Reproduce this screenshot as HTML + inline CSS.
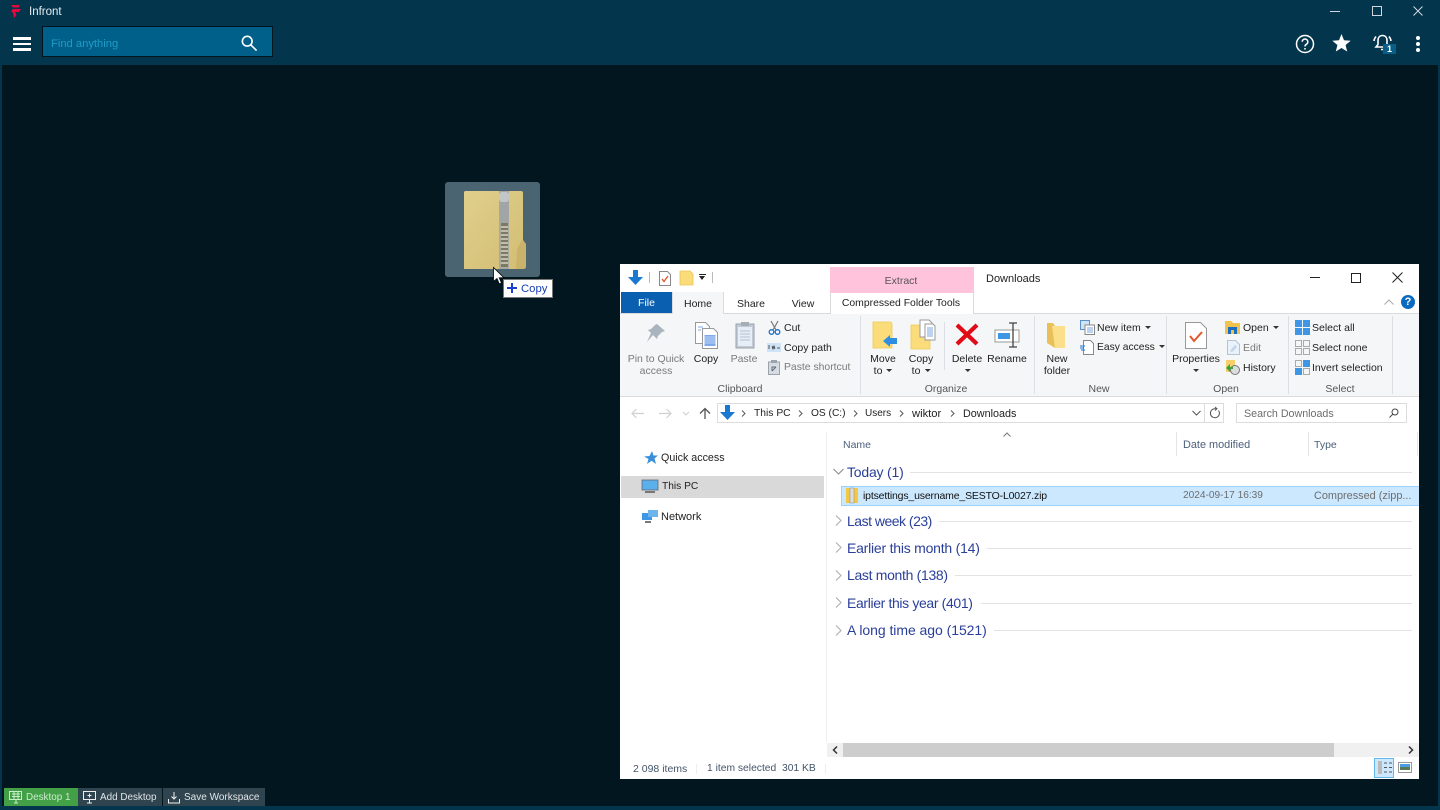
<!DOCTYPE html>
<html><head><meta charset="utf-8"><style>
html,body{margin:0;padding:0;width:1440px;height:810px;overflow:hidden;background:#01161f;font-family:"Liberation Sans",sans-serif}
#r{position:relative;width:1440px;height:810px;overflow:hidden}
.a{position:absolute}
.t{position:absolute;white-space:nowrap;font-size:11px;line-height:14px;color:#222}
.g{color:#7a7a7a}
.c{transform:translateX(-50%);text-align:center}
.h{position:absolute;white-space:nowrap;font-size:14px;line-height:18px;color:#2a3f9a}
.l{position:absolute;height:1px;background:#e3e3e3}
.v{position:absolute;width:1px;background:#dcdfe3}
.d{display:inline-block;width:0;height:0;border:3px solid transparent;border-top:3px solid #333;border-bottom:0;vertical-align:2px;margin-left:1px}
svg{position:absolute;overflow:visible}
</style></head><body><div id="r">
<!-- app chrome -->
<div class="a" style="left:0;top:0;width:1440px;height:65px;background:#03354d"></div>
<div class="a" style="left:0;top:65px;width:2px;height:745px;background:#03354d"></div>
<div class="a" style="right:0;top:65px;width:2px;height:745px;background:#03354d"></div>
<div class="a" style="left:0;top:806px;width:1440px;height:4px;background:#03354d"></div>
<svg style="left:10px;top:4px" width="12" height="15" viewBox="0 0 12 15"><path d="M1 1h9l-1.500 2.500H3zM3 5h8L9 8H5L6.500 11 4 14 3 9 1 7z" fill="#e4083f"/></svg>
<div class="t" style="left:29px;top:5px;font-size:11.500px;color:#e6edf0">Infront</div>
<div class="a" style="left:13px;top:37px;width:18px;height:2.500px;background:#fff"></div>
<div class="a" style="left:13px;top:42.500px;width:18px;height:2.500px;background:#fff"></div>
<div class="a" style="left:13px;top:48px;width:18px;height:2.500px;background:#fff"></div>
<div class="a" style="left:42px;top:26px;width:229px;height:29px;background:#00608a;border:1px solid #01141d"></div>
<div class="t" style="left:51px;top:37px;color:#1f9cc8;font-size:11.200px">Find anything</div>
<svg style="left:241px;top:35px" width="16" height="16" viewBox="0 0 18 18" fill="none" stroke="#fff" stroke-width="1.800"><circle cx="7" cy="7" r="5.500"/><path d="M11 11L17.500 17.500"/></svg>
<!-- window controls -->
<div class="a" style="left:1330px;top:11px;width:10px;height:1px;background:#cfd8dc"></div>
<div class="a" style="left:1372px;top:6px;width:8px;height:8px;border:1px solid #cfd8dc"></div>
<svg style="left:1413px;top:6px" width="10" height="10" fill="none" stroke="#cfd8dc"><path d="M.5.500l9 9M9.500.500l-9 9"/></svg>
<!-- right icons -->
<svg style="left:1295px;top:34px" width="20" height="20" viewBox="0 0 20 20" fill="none" stroke="#fff" stroke-width="1.500"><circle cx="10" cy="10" r="8.500"/><path d="M7.200 7.800a2.800 2.800 0 1 1 4.300 2.400c-1 .6-1.500 1.100-1.500 2.300"/><path d="M10 14v1.600"/></svg>
<svg style="left:1332px;top:34px" width="19" height="18" viewBox="0 0 19 18"><path d="M9.500 0l2.500 6.200 6.700.5-5.100 4.300 1.600 6.500-5.700-3.500-5.700 3.500 1.600-6.500L.300 6.700 7 6.200z" fill="#fff"/></svg>
<svg style="left:1373px;top:34px" width="20" height="18" viewBox="0 0 20 18" fill="none" stroke="#fff" stroke-width="1.600"><path d="M9.500 1.500c-3 0-4.500 2.300-4.500 5v4L3 13h13l-2-2.500v-4c0-2.700-1.500-5-4.500-5zM8 15.500h3"/><path d="M3 2.500A8 8 0 0 0 1 7M16 2.500a8 8 0 0 1 2 4.500"/></svg>
<div class="a" style="left:1383px;top:44px;width:13px;height:10px;background:#0a5d86;color:#fff;font:bold 9px/10px 'Liberation Sans';text-align:center">1</div>
<div class="a" style="left:1416px;top:36px;width:4px;height:4px;border-radius:2px;background:#fff"></div>
<div class="a" style="left:1416px;top:42px;width:4px;height:4px;border-radius:2px;background:#fff"></div>
<div class="a" style="left:1416px;top:48px;width:4px;height:4px;border-radius:2px;background:#fff"></div>
<!-- taskbar -->
<div class="a" style="left:4px;top:788px;width:74px;height:18px;background:#43a047"></div>
<div class="a" style="left:78px;top:788px;width:84px;height:18px;background:#30444f"></div>
<div class="a" style="left:163px;top:788px;width:102px;height:18px;background:#30444f"></div>
<svg style="left:9px;top:791px" width="14" height="13" fill="none" stroke="#c9eccb"><path d="M.5.500h12v8H.500zM5 12h4M7 9v3M3 3h8M3 5.500h8M5 1v7M9 1v7"/></svg>
<div class="t" style="left:26px;top:791px;font-size:9.900px;color:#c9eccb">Desktop 1</div>
<svg style="left:83px;top:791px" width="14" height="13" fill="none" stroke="#eee"><path d="M.5.500h12v8H.500zM4 12h5M6.500 9v3M6.500 2.500v4M4.500 4.500h4"/></svg>
<div class="t" style="left:100px;top:791px;font-size:9.900px;color:#dfe4e6">Add Desktop</div>
<svg style="left:168px;top:791px" width="12" height="13" fill="none" stroke="#eee"><path d="M.5 8v4h11V8M6 1v7M3.500 5.500L6 8l2.500-2.500"/></svg>
<div class="t" style="left:184px;top:791px;font-size:10px;color:#dfe4e6">Save Workspace</div>
<!-- drag ghost -->
<div class="a" style="left:445px;top:182px;width:95px;height:95px;border-radius:3px;background:#4a6472"></div>
<svg style="left:464px;top:191px" width="62" height="78" viewBox="0 0 62 78"><defs><linearGradient id="fg" x1="0" y1="0" x2="1" y2="1"><stop offset="0" stop-color="#e0cf8c"/><stop offset="1" stop-color="#d2bd72"/></linearGradient></defs><path d="M1 0h56q2 0 2 2v47l3 4v22q0 3-3 3H0V1z" fill="url(#fg)"/><path d="M53 58l-1 20h7q3 0 3-3V53l-4-4z" fill="#c9b36a"/><rect x="35" y="0" width="10" height="78" fill="#a8a9a2"/><rect x="35" y="1" width="10" height="10" rx="3" fill="#c2c6c6"/><rect x="36" y="11" width="9" height="21" fill="#a2a5a5"/><rect x="37" y="32" width="7" height="44" fill="#7d7a62"/><path d="M37 36h7M37 40h7M37 44h7M37 48h7M37 52h7M37 56h7M37 60h7M37 64h7M37 68h7M37 72h7" stroke="#d5d5c8" stroke-width="1.500"/></svg>
<svg style="left:493px;top:267px" width="12" height="18" viewBox="0 0 12 18"><path d="M.5.500v14l3.500-3 2.300 5.500 2.200-1-2.300-5.200H11z" fill="#fff" stroke="#000" stroke-width=".8"/></svg>
<div class="a" style="left:503px;top:279px;width:48px;height:17px;background:#fff;border:1px solid #777"></div>
<svg style="left:507px;top:283px" width="10" height="10"><path d="M5 0v10M0 5h10" stroke="#1a3fd0" stroke-width="2"/></svg>
<div class="t" style="left:521px;top:282px;color:#1a3fb0;font-size:11.300px">Copy</div>
<!-- explorer window -->
<div class="a" style="left:620px;top:264px;width:799px;height:515px;background:#fff"></div>
<svg style="left:628px;top:270px" width="15" height="15" viewBox="0 0 15 15"><path d="M5 0h5v7h5l-7.500 8L0 7h5z" fill="#1a78d0"/></svg>
<div class="a" style="left:649px;top:272px;width:1px;height:11px;background:#bbb"></div>
<svg style="left:659px;top:271px" width="12" height="15" fill="none"><path d="M.5.500h8l3 3v11H.500z" fill="#fff" stroke="#888"/><path d="M3 8l2 2.500L9 5" stroke="#e2562a" stroke-width="1.300"/></svg>
<svg style="left:680px;top:271px" width="13" height="15"><path d="M0 0h10l3 3v11H0z" fill="#fbdc7a" stroke="#e8c553" stroke-width=".8"/></svg>
<div class="a" style="left:699px;top:274px;width:7px;height:1px;background:#222"></div>
<div class="a" style="left:699px;top:276px;border:3.500px solid transparent;border-top:4px solid #222;border-bottom:0"></div>
<div class="a" style="left:712px;top:272px;width:1px;height:11px;background:#bbb"></div>
<div class="a" style="left:830px;top:267px;width:144px;height:26px;background:#ffc4dc"></div>
<div class="t c" style="left:901px;top:274px;color:#555;font-size:10.500px">Extract</div>
<div class="t" style="left:986px;top:272px;font-size:11px">Downloads</div>
<div class="a" style="left:1310px;top:277px;width:10px;height:1px;background:#222"></div>
<div class="a" style="left:1351px;top:273px;width:8px;height:8px;border:1px solid #222"></div>
<svg style="left:1392px;top:272px" width="11" height="11" fill="none" stroke="#222"><path d="M.5.500l10 10M10.500.500l-10 10"/></svg>
<!-- tabs -->
<div class="a" style="left:621px;top:292px;width:51px;height:21px;background:#0a5fb0;color:#fff;font-size:10.500px;line-height:23px;text-align:center">File</div>
<div class="a" style="left:620px;top:313px;width:799px;height:1px;background:#dadbdc"></div>
<div class="a" style="left:672px;top:292px;width:52px;height:22px;background:#f5f6f7;border:1px solid #dadbdc;border-bottom:0;border-top:0;box-sizing:border-box"></div>
<div class="t c" style="left:698px;top:297px;font-size:10.500px">Home</div>
<div class="t c" style="left:751px;top:297px;font-size:10.500px">Share</div>
<div class="t c" style="left:803px;top:297px;font-size:10.500px">View</div>
<div class="a" style="left:830px;top:293px;width:144px;height:21px;border:1px solid #dadbdc;border-top:0;border-bottom:0;box-sizing:border-box;background:#fff"></div>
<div class="t c" style="left:901px;top:297px;font-size:10.400px">Compressed Folder Tools</div>
<svg style="left:1384px;top:299px" width="10" height="6" fill="none" stroke="#aaa"><path d="M.5 5.500L5 1l4.500 4.500"/></svg>
<div class="a" style="left:1401px;top:295px;width:14px;height:14px;border-radius:7px;background:#0a6ac0;color:#fff;font:bold 11px/14px 'Liberation Sans';text-align:center">?</div>
<!-- ribbon -->
<div class="a" style="left:620px;top:314px;width:773px;height:82px;background:#f5f6f7"></div>
<div class="a" style="left:1393px;top:314px;width:26px;height:82px;background:#f5f6f7"></div>
<div class="a" style="left:620px;top:396px;width:799px;height:1px;background:#dadbdc"></div>
<div class="v" style="left:860px;top:316px;height:78px"></div>
<div class="v" style="left:1034px;top:316px;height:78px"></div>
<div class="v" style="left:1166px;top:316px;height:78px"></div>
<div class="v" style="left:1288px;top:316px;height:78px"></div>
<div class="v" style="left:1392px;top:316px;height:78px"></div>
<div class="v" style="left:944px;top:322px;height:48px"></div>
<svg style="left:646px;top:323px" width="20" height="22" viewBox="0 0 20 22"><path d="M11 1l8 7-3 1-4 4-1 3-4-4-6 7 4-9-3-3 3-1 4-4z" fill="#a9b4bf"/></svg>
<svg style="left:695px;top:322px" width="23" height="27" viewBox="0 0 23 27"><path d="M.5.500h10l4 4v17H.500z" fill="#fff" stroke="#999"/><path d="M7.500 6.500h11l4 4v16h-15z" fill="#fff" stroke="#999"/><path d="M9.500 13h11v11h-11z" fill="#7fa9e8"/><path d="M9.500 15h11M9.500 17h11M9.500 19h11M9.500 21h11" stroke="#cfe0f8" stroke-width=".7"/><path d="M3 5h5M3 8h3" stroke="#7fa9e8"/></svg>
<svg style="left:735px;top:321px" width="20" height="28" viewBox="0 0 20 28"><path d="M1 3h18v24H1z" fill="#c3cad3" stroke="#9aa3ad"/><path d="M3 6h14v19H3z" fill="#e5edf7"/><path d="M6 1h8v4H6z" fill="#a5adb6"/><path d="M5 10h10M5 13h10M5 16h10M5 19h10" stroke="#b8c3d2"/></svg>
<svg style="left:768px;top:321px" width="13" height="14" viewBox="0 0 13 14" fill="none"><path d="M3 0l5 9M10 0L5 9" stroke="#777" stroke-width="1.200"/><circle cx="3.500" cy="11" r="2.300" stroke="#1b6fc2" stroke-width="1.300"/><circle cx="9.500" cy="11" r="2.300" stroke="#1b6fc2" stroke-width="1.300"/></svg>
<svg style="left:767px;top:343px" width="14" height="10"><rect width="14" height="9" fill="#cfe3f6"/><path d="M2 2v4M5 3l1 3 1-3 1 3M10 5h3" stroke="#333" fill="none" stroke-width=".8"/></svg>
<svg style="left:768px;top:360px" width="12" height="15"><rect x=".5" y="2" width="11" height="12.500" fill="#d7dce3" stroke="#9aa3ad"/><rect x="3" y="0" width="6" height="3" fill="#9aa3ad"/><path d="M4 11V7h4M8 7L4 11" stroke="#5c6b7a" fill="none"/></svg>
<svg style="left:873px;top:322px" width="24" height="28" viewBox="0 0 24 28"><path d="M0 0h18l1 2v24H0z" fill="#fbdc7a" stroke="#edc958" stroke-width=".8"/><path d="M10 19l7-6v3h7v6h-7v3z" fill="#2e8fe0"/></svg>
<svg style="left:911px;top:320px" width="25" height="29" viewBox="0 0 25 29"><path d="M0 5h18l1 2v22H0z" fill="#fbdc7a" stroke="#edc958" stroke-width=".8"/><path d="M9 0h9l3 3v14H9z" fill="#fff" stroke="#999"/><path d="M14 4h8l2 2v14H14z" fill="#fff" stroke="#999"/><path d="M16 8h6M16 10h6M16 12h6M16 14h6M16 16h6" stroke="#7aa5df"/></svg>
<svg style="left:955px;top:323px" width="24" height="23" viewBox="0 0 24 23"><path d="M2 2l20 19M22 2L2 21" stroke="#e00b16" stroke-width="4.200"/></svg>
<svg style="left:994px;top:321px" width="27" height="28" viewBox="0 0 27 28" fill="none"><rect x="1" y="9" width="24" height="12" fill="#fff" stroke="#999"/><rect x="4" y="12" width="12" height="6" fill="#3d97e4"/><path d="M15 2h8M19 2v24M15 26h8" stroke="#444" stroke-width="1.300"/></svg>
<svg style="left:1047px;top:323px" width="18" height="26" viewBox="0 0 18 26"><path d="M0 0h6l2 3v22L0 20z" fill="#e9c058"/><path d="M5 3h13v22H8z" fill="#fcdf8a"/></svg>
<svg style="left:1080px;top:320px" width="15" height="15" fill="none"><rect x=".5" y=".5" width="9" height="9" fill="#cfe3f6" stroke="#5b8fc7"/><rect x="5" y="5" width="9.500" height="9.500" fill="#fff" stroke="#888"/><path d="M7 8h6M7 10h6M7 12h6" stroke="#7aa5df"/></svg>
<svg style="left:1080px;top:340px" width="14" height="15" fill="none"><path d="M3.500.500h7l3 3v11h-10z" fill="#fff" stroke="#888"/><path d="M0 6h5M0 8h4M1 10h4" stroke="#1a78d0"/></svg>
<svg style="left:1185px;top:322px" width="22" height="27" viewBox="0 0 22 27"><path d="M.5.500h15l6 6v20H.500z" fill="#fff" stroke="#999"/><path d="M5 14l4 5 8-9" stroke="#e2562a" stroke-width="2" fill="none"/></svg>
<svg style="left:1225px;top:321px" width="15" height="13"><path d="M0 0h6l2 2h7v11H0z" fill="#f2c24f"/><path d="M3 6h9v7H9V9H6v4H3z" fill="#1a6fc2"/></svg>
<svg style="left:1227px;top:340px" width="13" height="15" fill="none"><path d="M.5.500h8l4 4v10H.500z" fill="#e9f1fa" stroke="#b5c3d3"/><path d="M3 11l5-6 2 2-5 5z" fill="#c3d4e8"/></svg>
<svg style="left:1225px;top:360px" width="16" height="15"><path d="M1 0h9v12H1z" fill="#f5d06c"/><circle cx="10" cy="10" r="4.500" fill="#ddd" stroke="#777"/><path d="M1 8l4 4V9h3V7H5V4z" fill="#3aa53a"/></svg>
<svg style="left:1295px;top:320px" width="15" height="15" fill="#3d97e4"><rect width="7" height="7"/><rect x="8" width="7" height="7"/><rect y="8" width="7" height="7"/><rect x="8" y="8" width="7" height="7"/></svg>
<svg style="left:1295px;top:340px" width="15" height="15" fill="none" stroke="#aaa"><rect x=".5" y=".5" width="6" height="6"/><rect x="8.500" y=".5" width="6" height="6"/><rect x=".5" y="8.500" width="6" height="6"/><rect x="8.500" y="8.500" width="6" height="6"/></svg>
<svg style="left:1295px;top:360px" width="15" height="15"><rect x="8" width="7" height="7" fill="#3d97e4"/><rect y="8" width="7" height="7" fill="#3d97e4"/><rect x=".5" y=".5" width="6" height="6" fill="none" stroke="#aaa"/><rect x="8.500" y="8.500" width="6" height="6" fill="none" stroke="#aaa"/></svg>
<div class="t c g" style="left:656px;top:353px;line-height:12px;white-space:normal;width:70px;font-size:10.500px">Pin to Quick access</div>
<div class="t c" style="left:706px;top:353px;line-height:12px;font-size:10.500px">Copy</div>
<div class="t c g" style="left:744px;top:353px;line-height:12px;font-size:10.500px">Paste</div>
<div class="t" style="left:784px;top:321px;font-size:10.500px">Cut</div>
<div class="t" style="left:784px;top:341px;font-size:10.500px">Copy path</div>
<div class="t g" style="left:784px;top:361px;font-size:10.400px">Paste shortcut</div>
<div class="t c" style="left:740px;top:382px;font-size:10.500px;color:#555">Clipboard</div>
<div class="t c" style="left:883px;top:353px;line-height:12px;font-size:10.500px">Move<br>to <i class="d"></i></div>
<div class="t c" style="left:921px;top:353px;line-height:12px;font-size:10.500px">Copy<br>to <i class="d"></i></div>
<div class="t c" style="left:967px;top:353px;line-height:12px;font-size:10.500px">Delete<br><i class="d"></i></div>
<div class="t c" style="left:1007px;top:353px;line-height:12px;font-size:10.500px">Rename</div>
<div class="t c" style="left:946px;top:382px;font-size:10.500px;color:#555">Organize</div>
<div class="t c" style="left:1057px;top:353px;line-height:12px;font-size:10.500px">New<br>folder</div>
<div class="t" style="left:1097px;top:321px;font-size:10.500px">New item <i class="d"></i></div>
<div class="t" style="left:1097px;top:341px;font-size:10.300px">Easy access <i class="d"></i></div>
<div class="t c" style="left:1099px;top:382px;font-size:10.500px;color:#555">New</div>
<div class="t c" style="left:1196px;top:353px;line-height:12px;font-size:10.500px">Properties<br><i class="d"></i></div>
<div class="t" style="left:1243px;top:321px;font-size:10.500px">Open <i class="d"></i></div>
<div class="t g" style="left:1243px;top:341px;font-size:10.500px">Edit</div>
<div class="t" style="left:1243px;top:361px;font-size:10.500px">History</div>
<div class="t c" style="left:1226px;top:382px;font-size:10.500px;color:#555">Open</div>
<div class="t" style="left:1312px;top:321px;font-size:10.500px">Select all</div>
<div class="t" style="left:1312px;top:341px;font-size:10.500px">Select none</div>
<div class="t" style="left:1312px;top:361px;font-size:10.500px">Invert selection</div>
<div class="t c" style="left:1340px;top:382px;font-size:10.500px;color:#555">Select</div>
<!-- address row -->
<svg style="left:631px;top:408px" width="84" height="11" fill="none"><path d="M13 5.500H1M5.500 1L1 5.500 5.500 10M28 5.500H40M35.500 1L40 5.500 35.500 10" stroke="#d0d0d0" stroke-width="1.200"/><path d="M52 4l3 3 3-3" stroke="#d0d0d0"/><path d="M74 11V1M69 5.500L74 .5l5 5" stroke="#555" stroke-width="1.300"/></svg>
<div class="a" style="left:717px;top:403px;width:486px;height:18px;border:1px solid #dcdcdc"></div>
<div class="a" style="left:1205px;top:403px;width:18px;height:18px;border:1px solid #dcdcdc;border-left:0"></div>
<svg style="left:720px;top:405px" width="15" height="15" viewBox="0 0 15 15"><path d="M5 0h5v7h5l-7.500 8L0 7h5z" fill="#1a78d0"/></svg>
<svg style="left:741px;top:410px" width="5" height="7" fill="none" stroke="#555"><path d="M1 .5l3 3-3 3"/></svg><div class="t" style="left:754px;top:407px;font-size:10.300px">This PC</div>
<svg style="left:798px;top:410px" width="5" height="7" fill="none" stroke="#555"><path d="M1 .5l3 3-3 3"/></svg><div class="t" style="left:811px;top:407px;font-size:10.200px">OS (C:)</div>
<svg style="left:853px;top:410px" width="5" height="7" fill="none" stroke="#555"><path d="M1 .5l3 3-3 3"/></svg><div class="t" style="left:865px;top:407px;font-size:10px">Users</div>
<svg style="left:899px;top:410px" width="5" height="7" fill="none" stroke="#555"><path d="M1 .5l3 3-3 3"/></svg><div class="t" style="left:912px;top:407px;font-size:11.200px">wiktor</div>
<svg style="left:950px;top:410px" width="5" height="7" fill="none" stroke="#555"><path d="M1 .5l3 3-3 3"/></svg><div class="t" style="left:963px;top:407px;font-size:10.800px">Downloads</div>
<svg style="left:1192px;top:410px" width="9" height="6" fill="none" stroke="#555"><path d="M.5 1L4.500 5l4-4"/></svg>
<svg style="left:1209px;top:407px" width="12" height="12" fill="none" stroke="#555"><path d="M9.500 3.500a4.500 4.500 0 1 1-3.500-1.800H8M6 0l2 1.700L6 3.500"/></svg>
<div class="a" style="left:1236px;top:403px;width:169px;height:18px;border:1px solid #dcdcdc"></div>
<div class="t" style="left:1244px;top:407px;font-size:10.700px;color:#6d6d6d">Search Downloads</div>
<svg style="left:1389px;top:408px" width="10" height="10" fill="none" stroke="#444"><circle cx="6" cy="4" r="3"/><path d="M4 6L.5 9.500"/></svg>
<!-- nav pane -->
<div class="a" style="left:826px;top:432px;width:1px;height:310px;background:#eeeeee"></div>
<div class="a" style="left:621px;top:476px;width:203px;height:22px;background:#d9d9d9"></div>
<svg style="left:644px;top:451px" width="14" height="13" viewBox="0 0 14 13"><path d="M8 0l1.500 4.500H14L10.500 7.500 12 13 7.500 9.800 3 13l1.500-5L0 5.500l5.500-.5z" fill="#3a8fd8"/></svg>
<div class="t" style="left:661px;top:451px;font-size:10.700px">Quick access</div>
<svg style="left:642px;top:480px" width="16" height="14"><rect width="16" height="10" fill="#5ab0ea" stroke="#667" stroke-width=".8"/><rect x="3" y="11" width="10" height="2" fill="#777"/></svg>
<div class="t" style="left:662px;top:480px;font-size:10.200px">This PC</div>
<svg style="left:642px;top:509px" width="16" height="15"><rect x="0" y="4" width="10" height="7" fill="#3d97e4"/><rect x="6" y="1" width="10" height="7" fill="#6bb5ea"/><rect x="3" y="12" width="6" height="2" fill="#777"/></svg>
<div class="t" style="left:661px;top:510px;font-size:11px">Network</div>
<!-- column headers -->
<div class="t" style="left:843px;top:438px;font-size:10.500px;color:#4c607a">Name</div>
<svg style="left:1003px;top:432px" width="8" height="5" fill="none" stroke="#777"><path d="M.5 4.500L4 1l3.500 3.500"/></svg>
<div class="v" style="left:1176px;top:432px;height:24px;background:#e5e5e5"></div>
<div class="t" style="left:1183px;top:438px;font-size:10.900px;color:#4c607a">Date modified</div>
<div class="v" style="left:1308px;top:432px;height:24px;background:#e5e5e5"></div>
<div class="t" style="left:1314px;top:438px;font-size:10.500px;color:#4c607a">Type</div>
<div class="v" style="left:1417px;top:432px;height:24px;background:#e5e5e5"></div>
<!-- groups -->
<svg style="left:833px;top:468px" width="11" height="7" fill="none" stroke="#888"><path d="M.5 1L5.500 6l5-5"/></svg>
<div class="h" style="left:847px;top:463px;letter-spacing:-.2px">Today (1)</div><div class="l" style="left:910px;top:472px;width:502px"></div>
<div class="a" style="left:841px;top:486px;width:577px;height:18px;background:#cce8ff;border:1px solid #99d1ff;border-right:0"></div>
<svg style="left:846px;top:488px" width="12" height="15"><rect width="12" height="15" fill="#f5c842"/><rect x="4" width="4" height="15" fill="#ddd" stroke="#888" stroke-width=".5"/></svg>
<div class="t" style="left:863px;top:489px;font-size:10.500px;color:#111;letter-spacing:-.17px">iptsettings_username_SESTO-L0027.zip</div>
<div class="t" style="left:1183px;top:489px;font-size:10.150px;color:#6d6d6d">2024-09-17 16:39</div>
<div class="t" style="left:1314px;top:489px;font-size:10.900px;color:#6d6d6d">Compressed (zipp...</div>
<svg style="left:835px;top:515px" width="7" height="11" fill="none" stroke="#aaa"><path d="M1 .5l5 5-5 5"/></svg>
<div class="h" style="left:847px;top:511.500px;letter-spacing:-.5px">Last week (23)</div><div class="l" style="left:939px;top:521px;width:473px"></div>
<svg style="left:835px;top:542px" width="7" height="11" fill="none" stroke="#aaa"><path d="M1 .5l5 5-5 5"/></svg>
<div class="h" style="left:847px;top:539px;letter-spacing:-.22px">Earlier this month (14)</div><div class="l" style="left:987px;top:548px;width:425px"></div>
<svg style="left:835px;top:570px" width="7" height="11" fill="none" stroke="#aaa"><path d="M1 .5l5 5-5 5"/></svg>
<div class="h" style="left:847px;top:566px;letter-spacing:-.32px">Last month (138)</div><div class="l" style="left:955px;top:575px;width:457px"></div>
<svg style="left:835px;top:597px" width="7" height="11" fill="none" stroke="#aaa"><path d="M1 .5l5 5-5 5"/></svg>
<div class="h" style="left:847px;top:594px;letter-spacing:-.36px">Earlier this year (401)</div><div class="l" style="left:981px;top:603px;width:431px"></div>
<svg style="left:835px;top:625px" width="7" height="11" fill="none" stroke="#aaa"><path d="M1 .5l5 5-5 5"/></svg>
<div class="h" style="left:847px;top:621px;letter-spacing:-.05px">A long time ago (1521)</div><div class="l" style="left:994px;top:630px;width:418px"></div>
<!-- h scrollbar -->
<div class="a" style="left:827px;top:743px;width:592px;height:14px;background:#f0f0f0"></div>
<div class="a" style="left:843px;top:743px;width:491px;height:14px;background:#cdcdcd"></div>
<svg style="left:832px;top:746px" width="6" height="8" fill="none" stroke="#333" stroke-width="1.500"><path d="M5 .5L1.500 4 5 7.500"/></svg>
<svg style="left:1408px;top:746px" width="6" height="8" fill="none" stroke="#333" stroke-width="1.500"><path d="M1 .5L4.500 4 1 7.500"/></svg>
<!-- status -->
<div class="t" style="left:633px;top:762px;font-size:10.500px;color:#44546a">2 098 items</div>
<div class="t" style="left:707px;top:762px;font-size:10.300px;color:#44546a">1 item selected&nbsp; 301 KB</div>
<div class="v" style="left:696px;top:764px;height:10px;background:#eee"></div>
<div class="v" style="left:825px;top:764px;height:10px;background:#eee"></div>
<div class="a" style="left:1374px;top:758px;width:18px;height:18px;background:#cce8ff;border:1px solid #66b8e8"></div>
<svg style="left:1378px;top:761px" width="15" height="14"><path d="M0 0h4v13H0z" fill="#bbb"/><path d="M6 2h3M11 2h3M6 6.500h3M11 6.500h3M6 11h3M11 11h3" stroke="#555"/></svg>
<svg style="left:1398px;top:762px" width="14" height="11"><rect x=".5" y=".5" width="13" height="10" fill="#fff" stroke="#999"/><rect x="2" y="2" width="10" height="3" fill="#4b9ce0"/><rect x="2" y="5" width="10" height="3" fill="#5a7a55"/></svg>
</div></body></html>
